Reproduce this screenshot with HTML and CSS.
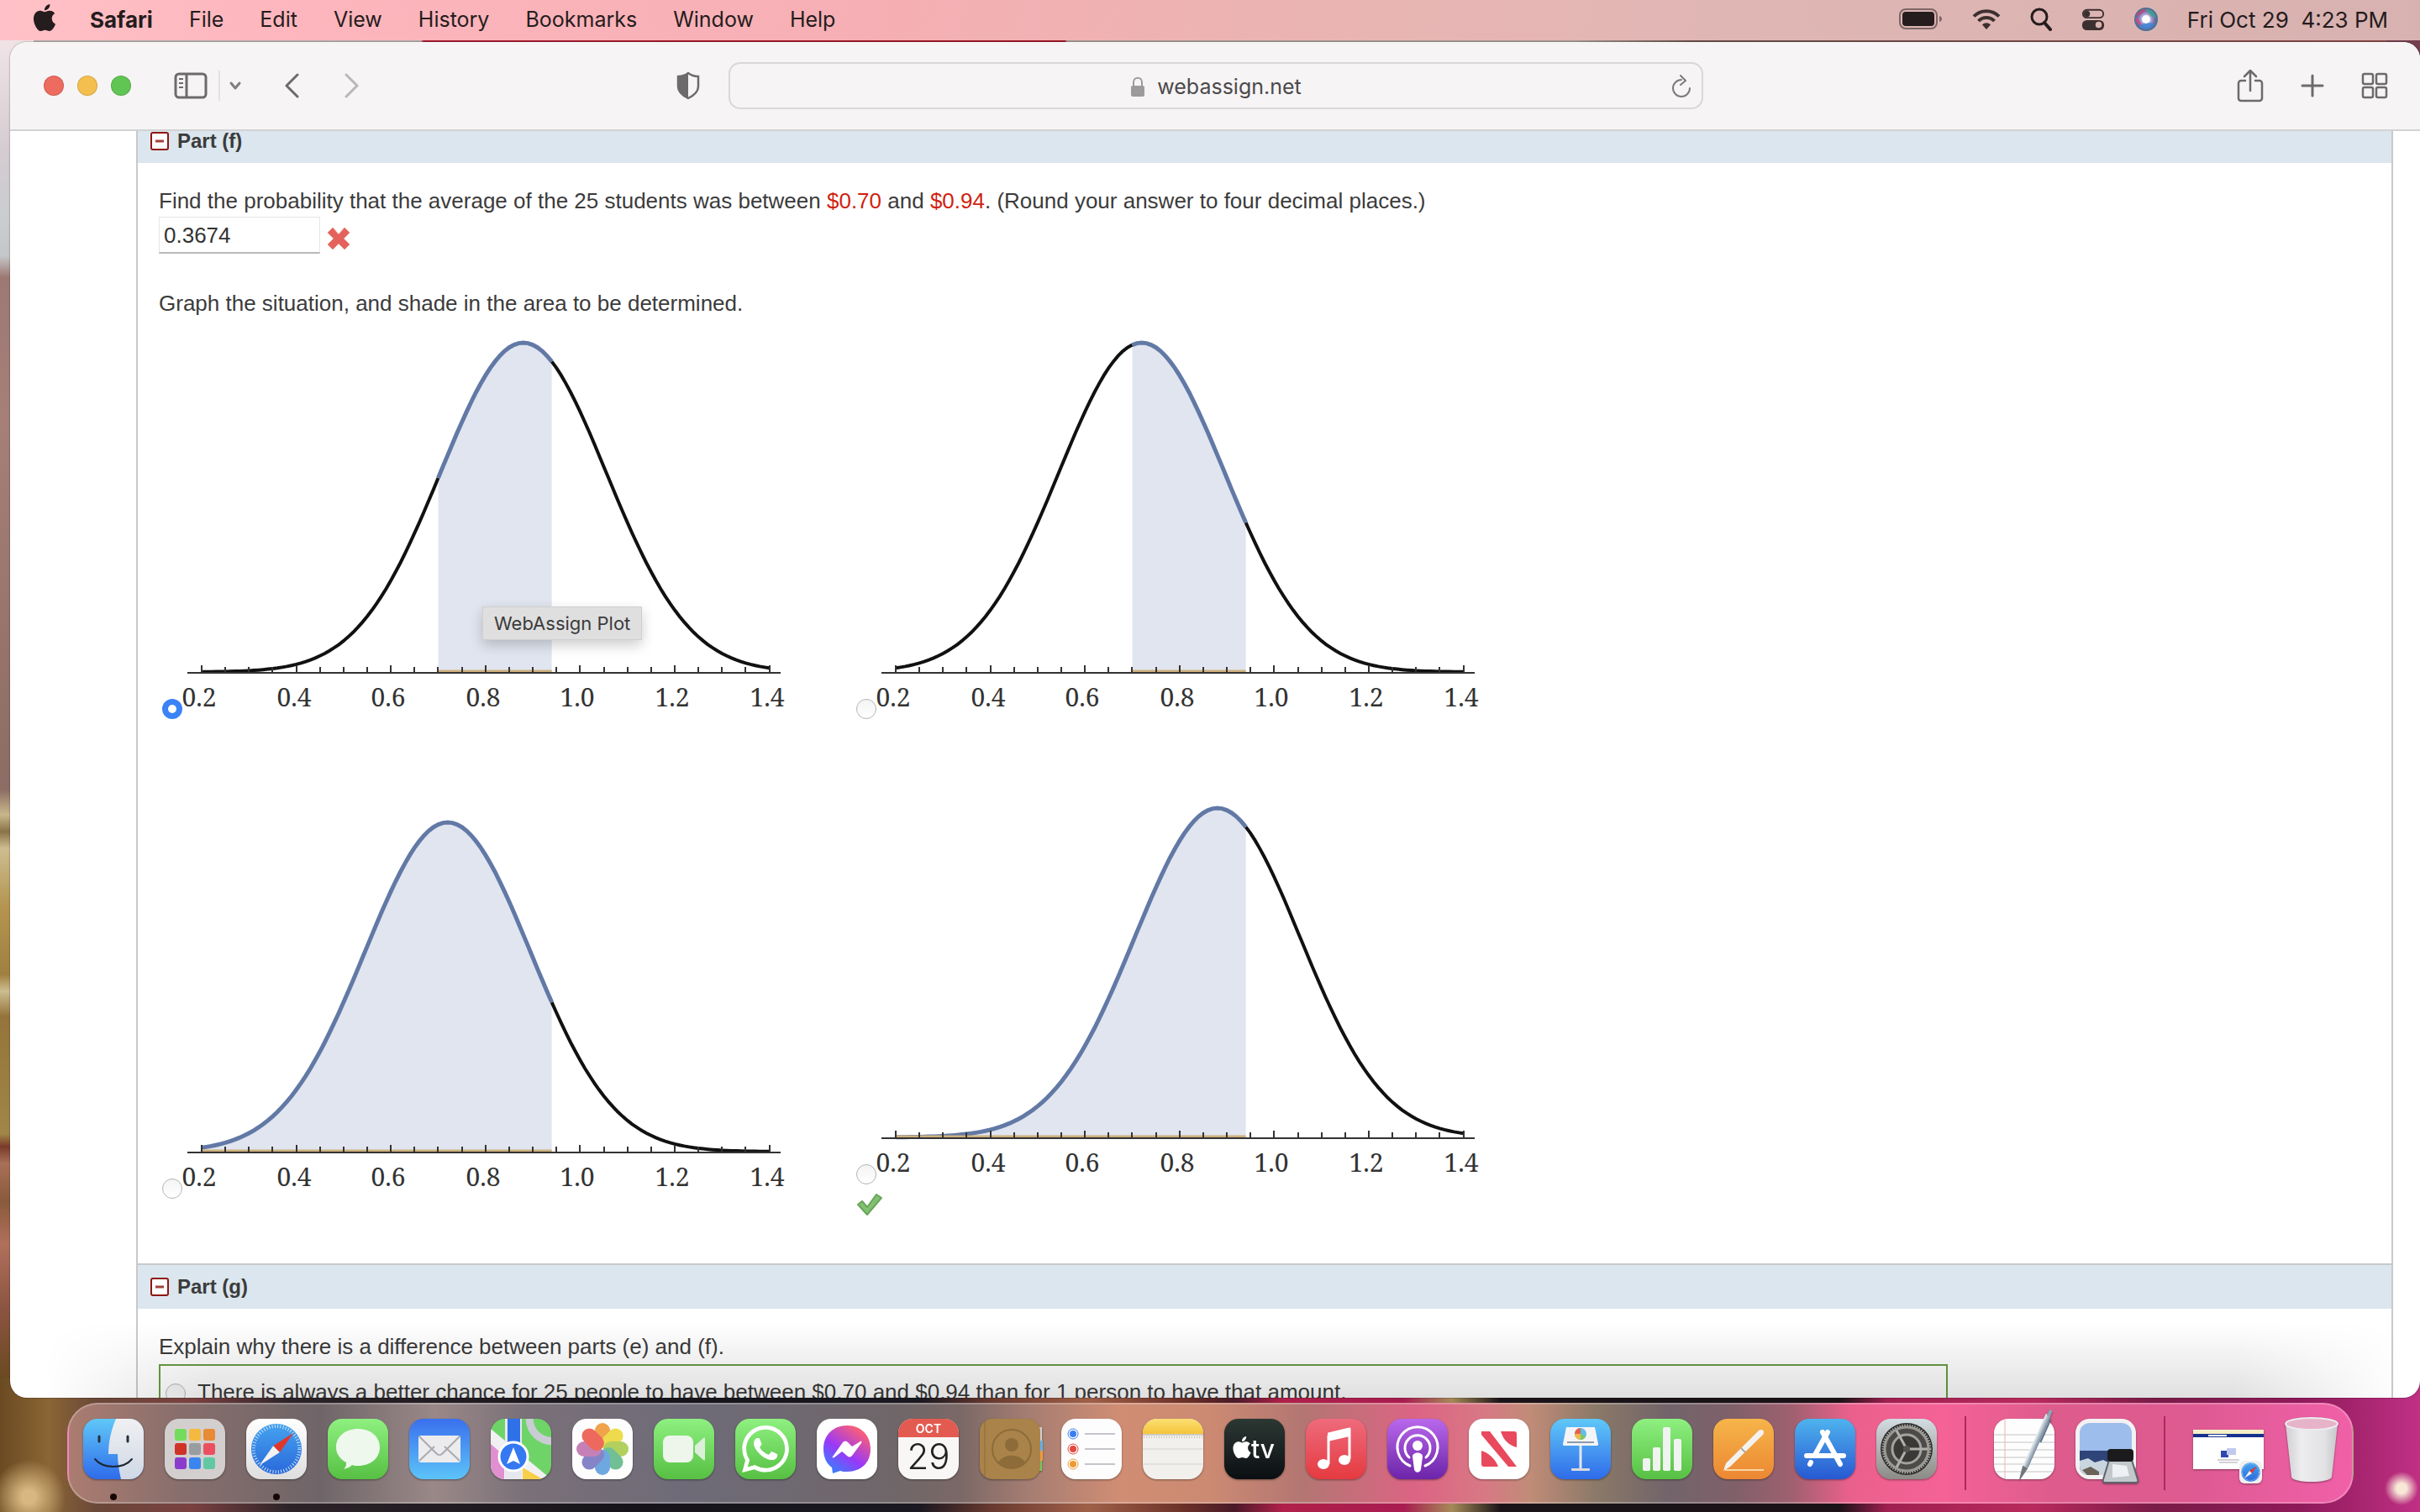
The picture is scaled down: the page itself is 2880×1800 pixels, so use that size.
FILE: index.html
```html
<!DOCTYPE html>
<html lang="en">
<head>
<meta charset="utf-8">
<title>webassign.net</title>
<link rel="stylesheet" href="styles.css">
</head>
<body class="desktop">

<svg class="defs" width="0" height="0" aria-hidden="true">
  <defs>
    <linearGradient id="g-blue" x1="0" y1="0" x2="0" y2="1"><stop offset="0" stop-color="#5fc8f8"/><stop offset="1" stop-color="#2f6bea"/></linearGradient>
    <linearGradient id="g-mail" x1="0" y1="0" x2="0" y2="1"><stop offset="0" stop-color="#3a70ee"/><stop offset="1" stop-color="#5cc4f8"/></linearGradient>
    <linearGradient id="g-green" x1="0" y1="0" x2="0" y2="1"><stop offset="0" stop-color="#8ef080"/><stop offset="1" stop-color="#57c043"/></linearGradient>
    <linearGradient id="g-white" x1="0" y1="0" x2="0" y2="1"><stop offset="0" stop-color="#ffffff"/><stop offset="1" stop-color="#dedede"/></linearGradient>
    <linearGradient id="g-face" x1="0" y1="0" x2="0" y2="1"><stop offset="0" stop-color="#f0f0f2"/><stop offset="1" stop-color="#cfd8e6"/></linearGradient>
    <linearGradient id="g-safari" x1="0" y1="0" x2="0" y2="1"><stop offset="0" stop-color="#45a3ef"/><stop offset="1" stop-color="#2a68da"/></linearGradient>
    <linearGradient id="g-messenger" x1="0" y1="1" x2=".7" y2="0"><stop offset="0" stop-color="#1c92ff"/><stop offset=".5" stop-color="#9a38f8"/><stop offset="1" stop-color="#ff6070"/></linearGradient>
    <linearGradient id="g-tv" x1="0" y1="0" x2="0" y2="1"><stop offset="0" stop-color="#2c3834"/><stop offset="1" stop-color="#0b0f12"/></linearGradient>
    <linearGradient id="g-music" x1="0" y1="0" x2="0" y2="1"><stop offset="0" stop-color="#ee6b7c"/><stop offset="1" stop-color="#e53a40"/></linearGradient>
    <linearGradient id="g-podcast" x1="0" y1="0" x2="0" y2="1"><stop offset="0" stop-color="#b968ec"/><stop offset="1" stop-color="#6c24a8"/></linearGradient>
    <linearGradient id="g-pages" x1="0" y1="0" x2="0" y2="1"><stop offset="0" stop-color="#f6b54a"/><stop offset="1" stop-color="#ec8732"/></linearGradient>
    <linearGradient id="g-store" x1="0" y1="0" x2="0" y2="1"><stop offset="0" stop-color="#4fb3ee"/><stop offset="1" stop-color="#2759d2"/></linearGradient>
    <linearGradient id="g-gear" x1="0" y1="0" x2="0" y2="1"><stop offset="0" stop-color="#d3dde2"/><stop offset="1" stop-color="#8c8a86"/></linearGradient>
    <linearGradient id="g-yellow" x1="0" y1="0" x2="0" y2="1"><stop offset="0" stop-color="#fbdf74"/><stop offset="1" stop-color="#f5c53a"/></linearGradient>
    <linearGradient id="g-trash" x1="0" y1="0" x2="1" y2="0"><stop offset="0" stop-color="#cfcfd2"/><stop offset=".3" stop-color="#ededef"/><stop offset=".75" stop-color="#e2e2e4"/><stop offset="1" stop-color="#c6c6ca"/></linearGradient>
    <linearGradient id="g-pen" x1="0" y1="0" x2="1" y2="0"><stop offset="0" stop-color="#eef4f8"/><stop offset="1" stop-color="#75879a"/></linearGradient>
    <radialGradient id="g-siri"><stop offset="0" stop-color="#ffffff"/><stop offset=".3" stop-color="#c9c0f0"/><stop offset=".7" stop-color="#7a6fa8"/><stop offset="1" stop-color="#3c6f92"/></radialGradient>
    <clipPath id="tile"><rect width="72" height="72" rx="17"/></clipPath>
    <symbol id="apple" viewBox="0 0 24 24"><path d="M12.152 6.896c-.948 0-2.415-1.078-3.96-1.04-2.04.027-3.91 1.183-4.961 3.014-2.117 3.675-.546 9.103 1.519 12.09 1.013 1.454 2.208 3.09 3.792 3.039 1.52-.065 2.09-.987 3.935-.987 1.831 0 2.35.987 3.96.948 1.637-.026 2.676-1.48 3.676-2.948 1.156-1.688 1.636-3.325 1.662-3.415-.039-.013-3.182-1.221-3.22-4.857-.026-3.04 2.48-4.494 2.597-4.559-1.429-2.09-3.623-2.324-4.39-2.376-2-.156-3.675 1.09-4.61 1.09zM15.53 3.83c.843-1.012 1.4-2.427 1.245-3.83-1.207.052-2.662.805-3.532 1.818-.78.896-1.454 2.338-1.273 3.714 1.338.104 2.715-.688 3.559-1.701"/></symbol>
    <symbol id="minus-box" viewBox="0 0 22 22"><rect x="1" y="1" width="20" height="20" rx="2" fill="#fff" stroke="#8e1712" stroke-width="2"/><path d="M6 11h10" stroke="#a1403c" stroke-width="3"/></symbol>
    <symbol id="compass" viewBox="0 0 64 64"><circle cx="32" cy="32" r="31" fill="url(#g-safari)"/><circle cx="32" cy="32" r="28" fill="none" stroke="#cfe6fb" stroke-width="4" stroke-dasharray="1 2.4"/><path d="M53 12L28 28l8 8z" fill="#e0372c"/><path d="M11 52l17-24 8 8z" fill="#f2f2f2"/></symbol>
  </defs>
</svg>

<header class="menubar">
  <nav class="menus" aria-label="Menu bar">
    <button class="menu apple-menu" aria-label="Apple"><svg width="32" height="32" fill="#251c1d"><use href="#apple"/></svg></button>
    <button class="menu menu-app">Safari</button>
    <button class="menu">File</button>
    <button class="menu">Edit</button>
    <button class="menu">View</button>
    <button class="menu">History</button>
    <button class="menu">Bookmarks</button>
    <button class="menu">Window</button>
    <button class="menu">Help</button>
  </nav>
  <div class="status">
    <svg width="52" height="26" viewBox="0 0 52 26"><rect x="1" y="1" width="44" height="23" rx="7" fill="none" stroke="#7d6666" stroke-width="2"/><rect x="4" y="4" width="38" height="17" rx="4" fill="#251c1d"/><path d="M48 9c4 1 4 6 0 7z" fill="#7d6666"/></svg>
    <svg width="34" height="26" viewBox="0 0 34 26" fill="none" stroke="#3d2f30" stroke-width="4"><path d="M2 9.500c8-8.500 22-8.500 30 0"/><path d="M7.500 15c5-5.500 14-5.500 19 0"/><path d="M17 25l-5-5.500c3-3 7-3 10 0z" fill="#3d2f30" stroke="none"/></svg>
    <svg width="26" height="28" viewBox="0 0 26 28" fill="none" stroke="#251c1d" stroke-width="3"><circle cx="11" cy="11" r="9"/><path d="M17 18l7 8" stroke-width="4" stroke-linecap="round"/></svg>
    <svg width="28" height="28" viewBox="0 0 30 28"><rect x="2" y="2" width="26" height="10" rx="5" fill="none" stroke="#3d2f30" stroke-width="2"/><circle cx="7" cy="7" r="4" fill="#3d2f30"/><rect x="1" y="15" width="28" height="13" rx="6" fill="#3d2f30"/><circle cx="22" cy="21" r="4" fill="#d9b3b1"/></svg>
    <svg width="28" height="28" viewBox="0 0 28 28"><circle cx="14" cy="14" r="14" fill="url(#g-siri)"/><path d="M2 9c3-6 9-8 13-7-4 3-7 7-11 8z" fill="#b84a78" opacity=".8"/><path d="M14 2c7 0 11 5 12 10-5 0-9-4-12-10z" fill="#3aa58c" opacity=".8"/><path d="M6 22c4-5 14-5 18-2-3 5-12 8-18 2z" fill="#3b86d8" opacity=".8"/><path d="M1 12c3 0 6 3 8 9-5-1-8-5-8-9z" fill="#d04a80" opacity=".8"/><circle cx="14" cy="14" r="5" fill="#fff" opacity=".9"/></svg>
    <time class="clock">Fri Oct 29&nbsp; 4:23 PM</time>
  </div>
</header>

<main class="window">
  <div class="toolbar">
    <div class="tools">
      <div class="lights">
        <button class="light light-close" aria-label="Close"></button>
        <button class="light light-min" aria-label="Minimise"></button>
        <button class="light light-max" aria-label="Zoom"></button>
      </div>
      <button class="tool tool-sidebar" aria-label="Sidebar"><svg width="40" height="32" viewBox="0 0 40 32" fill="none" stroke="#6c6a6b" stroke-width="3"><rect x="2" y="2" width="36" height="28" rx="4"/><path d="M15 2v28"/><path d="M6 8h5M6 13h5M6 18h5" stroke-width="2"/></svg></button>
      <span class="tool-divider"></span>
      <button class="tool tool-tabs" aria-label="Tab groups"><svg width="16" height="12" viewBox="0 0 16 12" fill="none" stroke="#807e7f" stroke-width="3" stroke-linecap="round" stroke-linejoin="round"><path d="M3 3l5 6 5-6"/></svg></button>
      <button class="tool tool-back" aria-label="Back"><svg width="18" height="30" viewBox="0 0 18 30" fill="none" stroke="#6c6a6b" stroke-width="3" stroke-linecap="round" stroke-linejoin="round"><path d="M16 2L3 15l13 13"/></svg></button>
      <button class="tool tool-forward" aria-label="Forward"><svg width="18" height="30" viewBox="0 0 18 30" fill="none" stroke="#b9b7b8" stroke-width="3" stroke-linecap="round" stroke-linejoin="round"><path d="M2 2l13 13L2 28"/></svg></button>
      <button class="tool tool-shield" aria-label="Privacy report"><svg width="28" height="34" viewBox="0 0 28 34"><path d="M14 2c4 3 8 4 12 4v12c0 7-6 11-12 14C8 29 2 25 2 18V6c4 0 8-1 12-4z" fill="none" stroke="#6c6a6b" stroke-width="2.500"/><path d="M14 2v30C8 29 2 25 2 18V6c4 0 8-1 12-4z" fill="#6c6a6b"/></svg></button>
    </div>
    <div class="address">
      <svg class="lock" width="18" height="24" viewBox="0 0 18 24"><path d="M4 12V7c0-7 10-7 10 0v5" fill="none" stroke="#9c9a9b" stroke-width="2"/><rect x="1" y="11" width="16" height="13" rx="2" fill="#9c9a9b"/></svg>
      <span>webassign.net</span>
      <button class="tool tool-reload" aria-label="Reload"><svg width="24" height="28" viewBox="0 0 24 28" fill="none" stroke="#7c7a7b" stroke-width="2" stroke-linecap="round" stroke-linejoin="round"><path d="M12 6a10 10 0 1 0 10 10"/><path d="M11 1l6 6-6 5"/></svg></button>
    </div>
    <div class="tools tools-right">
      <button class="tool" aria-label="Share"><svg width="32" height="40" viewBox="0 0 32 40" fill="none" stroke="#6c6a6b" stroke-width="2.500" stroke-linecap="round" stroke-linejoin="round"><path d="M10 14H5a3 3 0 0 0-3 3v18a3 3 0 0 0 3 3h22a3 3 0 0 0 3-3V17a3 3 0 0 0-3-3h-5"/><path d="M16 26V2M9 9l7-7 7 7"/></svg></button>
      <button class="tool" aria-label="New tab"><svg width="28" height="28" viewBox="0 0 28 28" stroke="#6c6a6b" stroke-width="3" stroke-linecap="round"><path d="M14 2v24M2 14h24"/></svg></button>
      <button class="tool" aria-label="Tab overview"><svg width="32" height="32" viewBox="0 0 32 32" fill="none" stroke="#6c6a6b" stroke-width="2.500"><rect x="2" y="2" width="12" height="12" rx="2"/><rect x="18" y="2" width="12" height="12" rx="2"/><rect x="2" y="18" width="12" height="12" rx="2"/><rect x="18" y="18" width="12" height="12" rx="2"/></svg></button>
    </div>
  </div>

  <div class="page">
    <section class="part">
      <h2 class="part-title"><svg width="22" height="22"><use href="#minus-box"/></svg>Part (f)</h2>
      <div class="part-body">
        <p class="line"><label for="answer">Find the probability that the average of the 25 students was between <b class="random">$0.70</b> and <b class="random">$0.94</b>. (Round your answer to four decimal places.)</label></p>
        <div class="answer-row">
          <input class="answer" id="answer" type="text" value="0.3674">
          <svg class="cross" width="28" height="28" viewBox="0 0 28 28" aria-label="Incorrect"><path d="M7 1l7 8 7-8 6 6-7 7 7 7-6 6-7-7-7 7-6-6 7-7-7-7z" fill="#e4625c" stroke="#ef8f89" stroke-width="1" stroke-linejoin="round"/></svg>
        </div>
        <p class="line">Graph the situation, and shade in the area to be determined.</p>
        <div class="choices">
          <label class="choice">
            <span class="choice-row"><input class="radio" type="radio" name="graph" checked><svg class="plot" viewBox="0 0 724 464" data-mean="0.88" data-from="0.7" data-to="0.94"></svg></span>
            <span class="tooltip" role="tooltip">WebAssign Plot</span>
          </label>
          <label class="choice">
            <span class="choice-row"><input class="radio" type="radio" name="graph"><svg class="plot" viewBox="0 0 724 464" data-mean="0.72" data-from="0.7" data-to="0.94"></svg></span>
          </label>
          <label class="choice">
            <span class="choice-row"><input class="radio" type="radio" name="graph"><svg class="plot" viewBox="0 0 724 464" data-mean="0.72" data-from="0.2" data-to="0.94"></svg></span>
          </label>
          <label class="choice">
            <span class="choice-row"><input class="radio" type="radio" name="graph"><svg class="plot" viewBox="0 0 724 464" data-mean="0.88" data-from="0.2" data-to="0.94"></svg></span>
            <svg class="tick" width="32" height="28" viewBox="0 0 32 28" aria-label="Correct"><path d="M2 14l5-4 6 7L24 2l6 4-17 20z" fill="#82c072" stroke="#69a55b" stroke-width="2" stroke-linejoin="round"/></svg>
          </label>
        </div>
      </div>
    </section>
    <section class="part">
      <h2 class="part-title"><svg width="22" height="22"><use href="#minus-box"/></svg>Part (g)</h2>
      <div class="part-body">
        <p class="line">Explain why there is a difference between parts (e) and (f).</p>
        <div class="options">
          <label class="option"><input class="radio" type="radio" name="why">There is always a better chance for 25 people to have between $0.70 and $0.94 than for 1 person to have that amount.</label>
        </div>
      </div>
    </section>
  </div>
</main>

<nav class="dock" aria-label="Dock">
  <button class="app app-running" aria-label="Finder"><svg viewBox="0 0 72 72"><g clip-path="url(#tile)"><rect width="72" height="72" fill="url(#g-blue)"/><path d="M39 0C33 14 30 28 30 42h11c0 11 2 21 4 30h27V0z" fill="url(#g-face)"/></g><path d="M19 21v6M53 21v6" stroke="#26313d" stroke-width="3" stroke-linecap="round"/><path d="M14 48c10 12 34 12 44 0" fill="none" stroke="#1d2733" stroke-width="2" stroke-linecap="round"/></svg></button>
  <button class="app" aria-label="Launchpad"><svg viewBox="0 0 72 72"><rect width="72" height="72" rx="17" fill="#d3cfcf"/><g><rect x="12" y="12" width="14" height="14" rx="3" fill="#74dc5c"/><rect x="29" y="12" width="14" height="14" rx="3" fill="#f4b93e"/><rect x="46" y="12" width="14" height="14" rx="3" fill="#e88a36"/><rect x="12" y="29" width="14" height="14" rx="3" fill="#cf3227"/><rect x="29" y="29" width="14" height="14" rx="3" fill="#989da0"/><rect x="46" y="29" width="14" height="14" rx="3" fill="#ea5060"/><rect x="12" y="46" width="14" height="14" rx="3" fill="#8b3ccc"/><rect x="29" y="46" width="14" height="14" rx="3" fill="#3a86f0"/><rect x="46" y="46" width="14" height="14" rx="3" fill="#62c8a4"/></g></svg></button>
  <button class="app app-running" aria-label="Safari"><svg viewBox="0 0 72 72"><rect width="72" height="72" rx="17" fill="url(#g-white)"/><use href="#compass" x="5" y="5" width="62" height="62"/></svg></button>
  <button class="app" aria-label="Messages"><svg viewBox="0 0 72 72"><rect width="72" height="72" rx="17" fill="url(#g-green)"/><path d="M36 12c15 0 26 9 26 22S51 56 36 56c-2 0-5 0-7-1-2 2-5 4-10 5 3-3 3-5 3-8-7-4-12-10-12-18 0-13 11-22 26-22z" fill="#eef8ec"/></svg></button>
  <button class="app" aria-label="Mail"><svg viewBox="0 0 72 72"><rect width="72" height="72" rx="17" fill="url(#g-mail)"/><rect x="11" y="20" width="50" height="32" rx="3" fill="#ececee"/><path d="M12 50l18-17M60 50L42 33M12 21l20 20c3 3 5 3 8 0l20-20" fill="none" stroke="#a9abaf" stroke-width="2"/></svg></button>
  <button class="app" aria-label="Maps"><svg viewBox="0 0 72 72"><g clip-path="url(#tile)"><rect width="72" height="72" fill="#6fd468"/><path d="M0 12l72 60H0z" fill="#f1f1f4"/><path d="M0 30l16 14v28H0z" fill="#e08fd0"/><path d="M38 58l24 14H38z" fill="#f8cf4a"/><rect x="17" width="20" height="72" fill="#e6e8ee"/><rect x="20" width="15" height="36" fill="#2f71e8"/><path d="M46 0c1 16 12 26 28 27" fill="none" stroke="#c9ccd4" stroke-width="9"/></g><circle cx="27" cy="45" r="17" fill="#3478f2" stroke="#fff" stroke-width="3"/><path d="M27 34l8 20-8-4-8 4z" fill="#fff"/></svg></button>
  <button class="app" aria-label="Photos"><svg viewBox="0 0 72 72"><rect width="72" height="72" rx="17" fill="#fdfdfd"/><g opacity=".9"><rect x="27" y="5" width="18" height="30" rx="9" fill="#f09a38"/><rect x="27" y="5" width="18" height="30" rx="9" fill="#ecd83a" transform="rotate(45 36 36)"/><rect x="27" y="5" width="18" height="30" rx="9" fill="#a9cc4e" transform="rotate(90 36 36)"/><rect x="27" y="5" width="18" height="30" rx="9" fill="#62b98a" transform="rotate(135 36 36)"/><rect x="27" y="5" width="18" height="30" rx="9" fill="#5f9fde" transform="rotate(180 36 36)"/><rect x="27" y="5" width="18" height="30" rx="9" fill="#7a78c4" transform="rotate(225 36 36)"/><rect x="27" y="5" width="18" height="30" rx="9" fill="#bf74ae" transform="rotate(270 36 36)"/><rect x="27" y="5" width="18" height="30" rx="9" fill="#ec5a4c" transform="rotate(315 36 36)"/></g></svg></button>
  <button class="app" aria-label="FaceTime"><svg viewBox="0 0 72 72"><rect width="72" height="72" rx="17" fill="url(#g-green)"/><rect x="11" y="20" width="36" height="32" rx="8" fill="#eef6ec"/><path d="M49 32l10-9c2-1 2 0 2 1v24c0 1 0 2-2 1l-10-9z" fill="#dcefd8"/></svg></button>
  <button class="app" aria-label="WhatsApp"><svg viewBox="0 0 72 72"><rect width="72" height="72" rx="17" fill="url(#g-green)"/><svg x="8" y="8" width="56" height="56" viewBox="0 0 24 24"><path fill="#fff" d="M17.472 14.382c-.297-.149-1.758-.867-2.030-.967-.273-.099-.471-.148-.670.150-.197.297-.767.966-.940 1.164-.173.199-.347.223-.644.075-.297-.150-1.255-.463-2.390-1.475-.883-.788-1.480-1.761-1.653-2.059-.173-.297-.018-.458.130-.606.134-.133.298-.347.446-.520.149-.174.198-.298.298-.497.099-.198.050-.371-.025-.520-.075-.149-.669-1.612-.916-2.207-.242-.579-.487-.500-.669-.510-.173-.008-.371-.010-.570-.010-.198 0-.520.074-.792.372-.272.297-1.040 1.016-1.040 2.479 0 1.462 1.065 2.875 1.213 3.074.149.198 2.096 3.200 5.077 4.487.709.306 1.262.489 1.694.625.712.227 1.360.195 1.871.118.571-.085 1.758-.719 2.006-1.413.248-.694.248-1.289.173-1.413-.074-.124-.272-.198-.570-.347m-5.421 7.403h-.004a9.870 9.870 0 0 1-5.031-1.378l-.361-.214-3.741.982.998-3.648-.235-.374a9.860 9.860 0 0 1-1.510-5.260c.001-5.450 4.436-9.884 9.888-9.884 2.640 0 5.122 1.030 6.988 2.898a9.825 9.825 0 0 1 2.893 6.994c-.003 5.450-4.437 9.884-9.885 9.884m8.413-18.297A11.815 11.815 0 0 0 12.050 0C5.495 0 .160 5.335.157 11.892c0 2.096.547 4.142 1.588 5.945L.057 24l6.305-1.654a11.882 11.882 0 0 0 5.683 1.448h.005c6.554 0 11.890-5.335 11.893-11.893a11.821 11.821 0 0 0-3.480-8.413z"/></svg></svg></button>
  <button class="app" aria-label="Messenger"><svg viewBox="0 0 72 72"><rect width="72" height="72" rx="17" fill="#fff"/><path d="M36 8c16 0 28 11 28 28S52 63 36 63c-3 0-6 0-8-1l-9 3-1-7C11 53 8 45 8 36 8 19 20 8 36 8z" fill="url(#g-messenger)"/><path d="M19 45l12-17c2-2 4-2 6 0l5 5 10-6c1-1 2 0 1 2L42 44c-2 2-4 2-6 0l-6-5-9 7c-2 1-3 0-2-1z" fill="#fff"/></svg></button>
  <button class="app" aria-label="Calendar"><svg viewBox="0 0 72 72"><g clip-path="url(#tile)"><rect width="72" height="72" fill="#f8f7f6"/><rect width="72" height="22" fill="#e35b50"/></g><text class="cal-month" x="36" y="17" text-anchor="middle">OCT</text><text class="cal-day" x="36" y="60" text-anchor="middle">29</text></svg></button>
  <button class="app" aria-label="Contacts"><svg viewBox="0 0 72 72"><path d="M66 10h8v16h-8z" fill="#cfcfcf"/><path d="M66 26h9v12h-9z" fill="#5fb0ea"/><path d="M66 38h9v12h-9z" fill="#f09a3e"/><path d="M66 50h8v12h-8z" fill="#6fcb5c"/><rect width="72" height="72" rx="15" fill="#a98349"/><path d="M6 3v66" stroke="#8d6c39" stroke-width="1"/><circle cx="38" cy="36" r="23" fill="none" stroke="#8d6c39" stroke-width="2"/><circle cx="38" cy="31" r="8" fill="#8d6c39"/><path d="M22 52c6-11 26-11 32 0-8 9-24 9-32 0z" fill="#8d6c39"/></svg></button>
  <button class="app" aria-label="Reminders"><svg viewBox="0 0 72 72"><rect width="72" height="72" rx="17" fill="#fdfdfd"/><path d="M28 18h36M28 36h36M28 54h36" stroke="#c4c4ca" stroke-width="2"/><g fill="none" stroke-width="1"><circle cx="14" cy="18" r="6" stroke="#3a7df2"/><circle cx="14" cy="36" r="6" stroke="#e5483c"/><circle cx="14" cy="54" r="6" stroke="#ee9a34"/></g><circle cx="14" cy="18" r="4" fill="#3a7df2"/><circle cx="14" cy="36" r="4" fill="#e5483c"/><circle cx="14" cy="54" r="4" fill="#ee9a34"/></svg></button>
  <button class="app" aria-label="Notes"><svg viewBox="0 0 72 72"><g clip-path="url(#tile)"><rect width="72" height="72" fill="#f1f0ed"/><rect width="72" height="18" fill="url(#g-yellow)"/><path d="M0 19h72" stroke="#a8a59a" stroke-width="1"/><path d="M1 22h71" stroke="#c4c2bb" stroke-width="2" stroke-dasharray="1 2"/><path d="M0 36h72M0 54h72" stroke="#d2d1cd" stroke-width="1"/></g></svg></button>
  <button class="app" aria-label="TV"><svg viewBox="0 0 72 72"><rect width="72" height="72" rx="17" fill="url(#g-tv)"/><use href="#apple" x="8" y="21" width="26" height="26" fill="#fff"/><text class="tv-word" x="32" y="47">tv</text></svg></button>
  <button class="app" aria-label="Music"><svg viewBox="0 0 72 72"><rect width="72" height="72" rx="17" fill="url(#g-music)"/><path d="M27 18l25-6v36" fill="none" stroke="#fff" stroke-width="3" stroke-linejoin="round"/><path d="M26 17l26-6v10l-26 6z" fill="#fff"/><path d="M27 20v34" stroke="#fff" stroke-width="3"/><ellipse cx="21" cy="54" rx="7" ry="6" fill="#fff"/><ellipse cx="46" cy="49" rx="7" ry="6" fill="#fff"/></svg></button>
  <button class="app" aria-label="Podcasts"><svg viewBox="0 0 72 72"><rect width="72" height="72" rx="17" fill="url(#g-podcast)"/><g fill="none" stroke="#fff" stroke-width="3" stroke-linecap="round"><path d="M27 56a24 24 0 1 1 18 0"/><path d="M26 46a15 15 0 1 1 20 0"/></g><circle cx="36" cy="32" r="6" fill="#fff"/><path d="M30 45c0-6 12-6 12 0l-2 15c-1 5-7 5-8 0z" fill="#fff"/></svg></button>
  <button class="app" aria-label="News"><svg viewBox="0 0 72 72"><rect width="72" height="72" rx="17" fill="#fff"/><path d="M15 15h10l32 42H47L15 19z" fill="#e8495c"/><path d="M38 15h16c2 0 3 1 3 3v16C48 32 41 25 38 15zM15 38c9 3 16 9 20 19H18c-2 0-3-1-3-3z" fill="#e8495c"/></svg></button>
  <button class="app" aria-label="Keynote"><svg viewBox="0 0 72 72"><rect width="72" height="72" rx="17" fill="url(#g-blue)"/><path d="M19 10h34l4 20c0 1 0 2-2 2H17c-2 0-2-1-2-2z" fill="#f4f4f6"/><path d="M20 28h32" stroke="#8c9cac" stroke-width="2"/><circle cx="36" cy="18" r="7" fill="#62bde8"/><path d="M36 18v-7a7 7 0 0 0-7 7z" fill="#e8604c"/><path d="M36 18h-7a7 7 0 0 0 7 7z" fill="#f2b84a"/><path d="M36 18v7a7 7 0 0 0 6-4z" fill="#7cc860"/><path d="M36 32v28" stroke="#e4e6ea" stroke-width="3"/><rect x="25" y="59" width="22" height="3" rx="1" fill="#d8dade"/></svg></button>
  <button class="app" aria-label="Numbers"><svg viewBox="0 0 72 72"><rect width="72" height="72" rx="17" fill="url(#g-green)"/><g fill="#f0f4f0"><rect x="13" y="47" width="9" height="15" rx="2"/><rect x="25" y="34" width="9" height="28" rx="2"/><rect x="37" y="10" width="9" height="52" rx="2"/><rect x="50" y="24" width="9" height="38" rx="2"/></g></svg></button>
  <button class="app" aria-label="Pages"><svg viewBox="0 0 72 72"><rect width="72" height="72" rx="17" fill="url(#g-pages)"/><path d="M14 61h46" stroke="#f9d5a4" stroke-width="2"/><path d="M54 14c4-3 8 1 5 5L20 57l-8 5 3-9z" fill="#f4f2f0"/><path d="M33 35l5 5" stroke="#a9a6a2" stroke-width="2"/></svg></button>
  <button class="app" aria-label="App Store"><svg viewBox="0 0 72 72"><rect width="72" height="72" rx="17" fill="url(#g-store)"/><g stroke="#fff" stroke-width="6" stroke-linecap="round"><path d="M33 16l21 38M39 16L24 43M18 54l1-2M14 44h44"/></g></svg></button>
  <button class="app" aria-label="System Preferences"><svg viewBox="0 0 72 72"><rect width="72" height="72" rx="17" fill="url(#g-gear)"/><circle cx="36" cy="36" r="31" fill="#2c2c2c"/><circle cx="36" cy="36" r="26" fill="#4c4b49" stroke="#989792" stroke-width="3"/><circle cx="36" cy="36" r="28" fill="none" stroke="#a9a8a3" stroke-width="3" stroke-dasharray="1.500 1.500"/><circle cx="36" cy="36" r="17" fill="#3a3937" stroke="#a3a29d" stroke-width="3"/><path d="M36 36h25M36 36L24 14M36 36L24 58" stroke="#b0afaa" stroke-width="3"/><circle cx="36" cy="36" r="4" fill="#55534f"/></svg></button>
  <span class="dock-divider"></span>
  <button class="app" aria-label="TextEdit"><svg viewBox="0 0 72 72"><rect width="72" height="72" rx="17" fill="#fdfdfd"/><path d="M0 19h72M0 28h72M0 37h72M0 46h72M0 54h72M3 63h66" stroke="#c4c4c4" stroke-width="1"/><path d="M13 1v70" stroke="#efb4ae" stroke-width="1"/><g transform="rotate(24 50 30)"><rect x="46" y="-8" width="7" height="68" rx="2" fill="url(#g-pen)"/><rect x="48" y="-14" width="4" height="8" fill="#8ea6b8"/><rect x="53" y="-4" width="2" height="30" fill="#60748a"/><path d="M46 60h7l-3 17h-1z" fill="#70777e"/></g></svg></button>
  <button class="app" aria-label="Preview"><svg viewBox="0 0 72 72"><rect width="72" height="72" rx="17" fill="#f3f1f2"/><rect x="5" y="5" width="62" height="62" rx="12" fill="#9dbdec"/><path d="M5 38h62v18c0 8-4 11-12 11H17C9 67 5 63 5 56z" fill="#2f4478"/><path d="M5 50l10-3 8 5 10-3 12 6v12H17C9 67 5 63 5 56z" fill="#c9d6e0"/><path d="M8 61l10-4 10 6v4H14z" fill="#6a6258"/><path d="M41 46h25l8 26c1 4-1 4-3 4H36c-3 0-4-1-3-4z" fill="#c2c8cc" stroke="#5d6468" stroke-width="2"/><path d="M44 54l17 2 3 12-20 2z" fill="#eef1f3"/><rect x="38" y="36" width="31" height="15" rx="4" fill="#1b1b1d"/></svg></button>
  <span class="dock-divider"></span>
  <button class="app app-window" aria-label="Minimised window"><svg viewBox="0 0 84 72"><rect y="13" width="84" height="47" fill="#fff"/><rect y="13" width="84" height="5" fill="#f5efc8"/><rect y="18" width="84" height="4" fill="#16308e"/><rect x="18" y="19" width="22" height="2" fill="#fff"/><rect x="33" y="38" width="9" height="8" fill="#2f48b0"/><rect x="40" y="35" width="11" height="8" fill="#c3c9ee"/><path d="M29 49h26M31 52h22" stroke="#a5a5ac" stroke-width="1"/><rect x="55" y="50" width="27" height="27" rx="6" fill="#f0f0f0"/><use href="#compass" x="57" y="52" width="23" height="23"/></svg></button>
  <button class="app app-trash" aria-label="Trash"><svg viewBox="0 0 64 78"><path d="M1 8l7 63c1 8 47 8 48 0L63 8z" fill="url(#g-trash)"/><ellipse cx="32" cy="8" rx="31" ry="7" fill="#e7b3c9" stroke="#ececee" stroke-width="2"/></svg></button>
</nav>

<script src="plots.js"></script>
</body>
</html>
```
FILE: styles.css
```css
* { box-sizing: border-box; }

.desktop {
  margin: 0;
  height: 100vh;
  overflow: hidden;
  display: flex;
  flex-direction: column;
  font-family: "Inter", "Liberation Sans", sans-serif;
  font-size: 25px;
  color: #3b3b3b;
  background:
    radial-gradient(circle at calc(100% - 22px) calc(100% - 28px), #f8e8d8 6px, #f8e8d800 20px),
    radial-gradient(circle at 34px calc(100% - 18px), #d8b880 8px, #d8b88000 44px),
    linear-gradient(#efe3e6 50px, #d5ccd1 180px, #c9cdd0 265px, #c4c6c8 305px, #9d7974 330px, #a57f78 500px, #8c6c64 940px, #c9b78c 970px, #8a7248 990px, #cdbd90 1010px, #b4944f 1080px, #a08040 1160px, #cdbd90 1180px, #94743a 1210px, #a08648 1350px, #7a3a2a 1365px, #a87058 1385px, #885a3c 1430px, #b0705c 1480px, #8a5440 1560px, #6b4a22 1640px) left top / 40px calc(100% - 160px) no-repeat,
    linear-gradient(#74404e, #9c2060) right top / 40px calc(100% - 160px) no-repeat,
    linear-gradient(90deg, #6b4a22 0, #8a6535 2%, #6a4838 4%, #7a4040 8%, #2b2328 12%, #16141a 26%, #1a1820 38%, #6a3a30 41%, #a06048 45%, #6a3028 49%, #4a1a28 51%, #b0204a 53%, #a81c50 58%, #a58a58 60%, #1a1418 62%, #1a1216 76%, #a02050 78%, #b82a5c 84%, #7a1c48 89%, #8e1a5a 95%, #c03084 100%) bottom / 100% 160px no-repeat,
    linear-gradient(90deg, #b8b0b0 17.400%, #a81c30 17.500%, #a01828 44%, #a89c94 44.100%, #a89c94 65%, #6a5048 70%, #8a4848 100%);
}

.defs { position: absolute; }

button {
  padding: 0;
  border: 0;
  background: none;
  font: inherit;
  color: inherit;
}

svg { display: block; flex: none; }

/* Menu bar */
.menubar {
  flex: none;
  height: 48px;
  padding: 0 38px 2px 37px;
  display: flex;
  align-items: center;
  justify-content: space-between;
  color: #251c1d;
  background: linear-gradient(90deg, #ffc1c7 0, #fdb6bd 12%, #f6afb4 36%, #e8b5b3 58%, #dfb6b4 72%, #d8b2b0 100%);
}
.menus { display: flex; align-items: center; gap: 43px; }
.apple-menu { margin: -4px -5px 0 0; }
.menu-app { font-size: 26px; font-weight: 700; }
.status { display: flex; align-items: center; gap: 35px; }
.clock { font-size: 26px; }

/* Browser window */
.window {
  flex: 1;
  min-height: 0;
  margin: 2px 0 6px 12px;
  display: flex;
  flex-direction: column;
  border-radius: 20px;
  overflow: hidden;
  background: #fff;
  box-shadow: 0 0 2px #0008;
  position: relative;
}
.window::after {
  content: "";
  position: absolute;
  inset: auto 20px 0 40px;
  height: 90px;
  background: linear-gradient(#0000, #0000001f);
  mask-image: linear-gradient(90deg, #0000, #000 200px, #000 calc(100% - 200px), #0000);
  pointer-events: none;
}
.toolbar {
  flex: none;
  height: 106px;
  padding: 0 38px 0 40px;
  display: grid;
  grid-template-columns: 1fr 1160px 1fr;
  align-items: center;
  background: #f6f4f5;
  border-bottom: 2px solid #d2d2d4;
}
.tools { display: flex; align-items: center; }
.tools-right { justify-content: flex-end; gap: 44px; }
.lights { display: flex; gap: 16px; }
.light { width: 24px; height: 24px; border-radius: 50%; border: 1px solid #0002; }
.light-close { background: #ed6b5f; }
.light-min { background: #f5bf4f; }
.light-max { background: #61c554; }
.tool-sidebar { margin-left: 51px; }
.tool-divider { width: 2px; height: 36px; margin: 0 10px 0 13px; background: #e4e2e3; }
.tool-back { margin-left: 50px; }
.tool-forward { margin-left: 54px; }
.tool-shield { margin: 0 34px 0 auto; }
.address {
  height: 56px;
  padding: 2px 12px 0 0;
  display: flex;
  align-items: center;
  border: 2px solid #d9d7d8;
  border-radius: 14px;
  color: #4c4a4b;
}
.lock { margin: 0 14px 0 auto; }
.tool-reload { margin-left: auto; }
.address::before { content: ""; width: 36px; }

/* Assignment page */
.page {
  flex: 1;
  min-height: 0;
  overflow: hidden;
  padding: 0 32px 0 150px;
  font-family: "Liberation Sans", Arial, sans-serif;
  font-size: 26px;
}
.part { border: solid #c8c9cb; border-width: 2px 2px 0; }
.part:first-child { margin-top: -16px; }
.part-title {
  height: 52px;
  margin: 0;
  padding: 0 15px;
  display: flex;
  align-items: center;
  gap: 10px;
  font-size: 24px;
  background: #dce6ee;
}
.part-body { padding: 30px 25px 56px; }
.line { margin: 0; line-height: 30px; }
.random { font-weight: 400; color: #d01f10; }
.answer-row { display: flex; align-items: center; gap: 8px; margin: 4px 0 44px; }
.answer {
  width: 192px;
  height: 44px;
  padding: 2px 5px 0;
  border: 1px solid #e6e6e6;
  border-bottom: 2px solid #b9b9b9;
  font: inherit;
  color: #333;
}
.cross { margin-top: 8px; }
.choices {
  display: grid;
  grid-template-columns: max-content max-content;
  column-gap: 74px;
  row-gap: 90px;
  align-items: center;
  margin-top: 20px;
}
.choice { position: relative; padding-left: 4px; }
.choice-row { display: flex; align-items: flex-end; }
.radio {
  appearance: none;
  flex: none;
  width: 24px;
  height: 24px;
  margin: 0 0 4px;
  border: 1px solid #b4b4b4;
  border-radius: 50%;
  background: linear-gradient(#f4f4f4, #fff);
}
.radio:checked { border: 7px solid #3b82f7; background: #fff; }
.plot { width: 724px; height: 464px; overflow: visible; }
.plot-label { font: 30px "Noto Serif", "Liberation Serif", serif; fill: #333; }
.plot-axis { stroke: #333; stroke-width: 2; fill: none; }
.plot-area { fill: #e0e5ef; }
.plot-base { stroke: #cdb07c; stroke-width: 3; }
.plot-curve { fill: none; stroke: #111; stroke-width: 4; }
.plot-curve-shaded { stroke: #6279a6; stroke-width: 5; }
.tick { margin-top: 6px; }
.tooltip {
  position: absolute;
  left: 385px;
  top: 326px;
  padding: 0 13px;
  border: 1px solid #cfcfcf;
  background: #dfdfdf;
  box-shadow: 0 6px 16px #0003;
  font: 22px/38px "Inter", sans-serif;
  white-space: nowrap;
}
.options { width: 2129px; max-width: 100%; height: 200px; margin-top: 6px; border: 2px solid #6a9c42; }
.option { display: flex; padding: 16px 6px; gap: 14px; line-height: 30px; }
.option .radio { margin: 5px 0 0; }

/* Dock */
.dock {
  flex: none;
  align-self: center;
  height: 120px;
  margin-bottom: 10px;
  padding: 17px 16px 0 17px;
  display: flex;
  gap: 25px;
  border: 2px solid #ffffff40;
  border-radius: 36px;
  background: linear-gradient(90deg, #ab7c70 0, #876e6c 5%, #6f6568 11%, #9a8888 16%, #7a7078 20%, #6e6b78 27%, #6f6669 36%, #7a6866 39%, #a57d72 42%, #d08d74 46%, #cc8a72 50%, #b37672 54%, #dc6484 59%, #d87884 62%, #c08c78 64%, #8a7868 67%, #72646a 70%, #80606a 73%, #a06070 75.500%, #ea608c 78%, #f56296 82%, #dd5c8c 87%, #de5a92 93%, #f060a8 100%);
}
.app { width: 72px; height: 72px; position: relative; }
.app svg { width: 100%; height: 100%; overflow: visible; }
.app > svg { filter: drop-shadow(0 1px 1px #0006); }
.app svg svg { width: 56px; height: 56px; }
.app-window { width: 84px; }
.app-trash { width: 64px; height: 78px; margin-top: -2px; }
.app-running::after {
  content: "";
  position: absolute;
  left: 32px;
  top: 89px;
  width: 8px;
  height: 8px;
  border-radius: 50%;
  background: #180606;
}
.dock-divider { width: 2px; height: 88px; margin: -3px 8px 0; background: #b0285c; }
.cal-month { font: 600 14px "Inter", sans-serif; fill: #fff; }
.cal-day { font: 300 42px "Inter", sans-serif; fill: #222; }
.tv-word { font: 500 30px "Inter", sans-serif; fill: #fff; }
```
FILE: plots.js
```js
// Draws each normal curve from the mean and shaded range on its <svg>.
const SIGMA = 0.175;
const AXIS_Y = 405;
const PEAK = 392;
const SVG_NS = "http://www.w3.org/2000/svg";

const toX = (value) => 23 + (value - 0.2) * 563;

function add(svg, name, attributes, text) {
  const node = document.createElementNS(SVG_NS, name);
  for (const key in attributes) node.setAttribute(key, attributes[key]);
  if (text) node.textContent = text;
  svg.append(node);
}

function curve(mean, from, to) {
  const points = [];
  const steps = Math.round((to - from) * 100);
  for (let i = 0; i <= steps; i++) {
    const value = from + ((to - from) * i) / steps;
    const height = PEAK * Math.exp(-((value - mean) ** 2) / (2 * SIGMA ** 2));
    points.push(toX(value).toFixed(1) + " " + (AXIS_Y - 1 - height).toFixed(1));
  }
  return "M" + points.join("L");
}

for (const svg of document.querySelectorAll(".plot")) {
  const mean = Number(svg.dataset.mean);
  const from = Number(svg.dataset.from);
  const to = Number(svg.dataset.to);

  add(svg, "path", { class: "plot-area", d: `${curve(mean, from, to)}L${toX(to)} ${AXIS_Y}L${toX(from)} ${AXIS_Y}Z` });

  let axis = `M6 ${AXIS_Y}H712`;
  for (let i = 0; i <= 24; i++) {
    axis += `M${Math.round(toX(0.2 + i * 0.05))} ${AXIS_Y}v${i % 4 ? -7 : -9}`;
  }

  if (from > 0.2) add(svg, "path", { class: "plot-curve", d: curve(mean, 0.2, from) });
  add(svg, "path", { class: "plot-curve", d: curve(mean, to, 1.4) });
  add(svg, "path", { class: "plot-curve plot-curve-shaded", d: curve(mean, from, to) });
  add(svg, "path", { class: "plot-base", d: `M${toX(from)} ${AXIS_Y - 2}H${toX(to)}` });
  add(svg, "path", { class: "plot-axis", d: axis });

  for (let i = 0; i <= 6; i++) {
    const value = 0.2 + i * 0.2;
    add(svg, "text", { class: "plot-label", x: Math.round(toX(value)) - 3, y: 445, "text-anchor": "middle" }, value.toFixed(1));
  }
}
```
